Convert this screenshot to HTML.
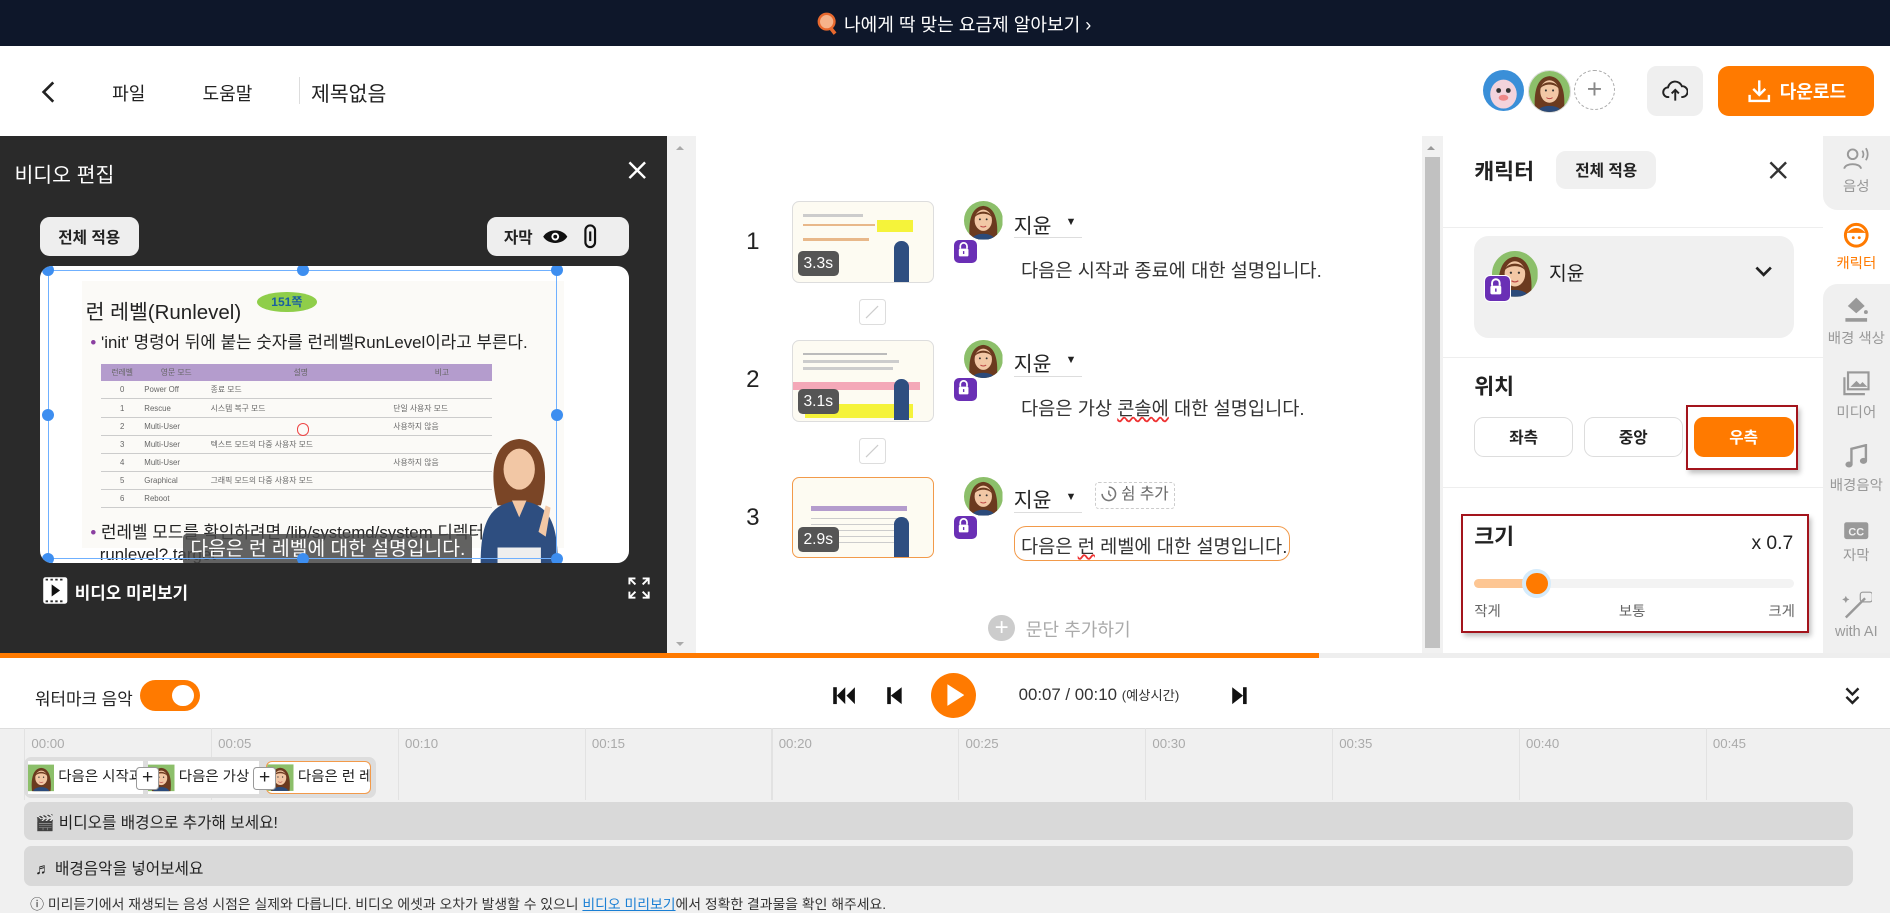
<!DOCTYPE html>
<html><head><meta charset="utf-8"><style>
html,body{margin:0;padding:0;}
html{zoom:1.2054;}
body{width:1568px;height:757px;position:relative;overflow:hidden;background:#fff;font-family:"Liberation Sans","Noto Sans CJK KR",sans-serif;color:#222;}
.a{position:absolute;}
.btn{position:absolute;display:flex;align-items:center;justify-content:center;box-sizing:border-box;}
.av{position:absolute;border-radius:50%;overflow:hidden;}
.lock{position:absolute;width:19px;height:19px;background:#6a2fb5;border-radius:5px;border:1.5px solid #fff;}
.tab{position:absolute;left:1512px;width:56px;text-align:center;font-size:12px;color:#999;}
.tl{position:absolute;top:611px;font-size:11px;color:#aaa;}
.vl{position:absolute;top:604px;width:1px;height:60px;background:#e2e2e2;}
.nm{position:absolute;font-size:17px;width:57px;border-bottom:1px solid #ddd;height:24px;}
.nm span{position:absolute;left:43px;top:6px;font-size:9px;}
</style></head><body>
<svg width="0" height="0" style="position:absolute"><defs>
<symbol id="face" viewBox="0 0 40 40"><rect width="40" height="40" fill="#8cbf6a"/><path d="M6 40 C4 20 8 6 20 5 C32 6 36 20 34 40Z" fill="#6b3a1f"/><ellipse cx="20" cy="20" rx="9" ry="11" fill="#f2c7a5"/><path d="M11 17 C13 9 27 9 29 17 C25 12 15 12 11 17Z" fill="#6b3a1f"/><path d="M8 40 C10 32 30 32 32 40Z" fill="#2b4a7a"/><circle cx="16.5" cy="19" r="1" fill="#333"/><circle cx="23.5" cy="19" r="1" fill="#333"/><path d="M17 26 Q20 28 23 26" stroke="#b44" fill="none"/></symbol>
<symbol id="lk" viewBox="0 0 20 20"><path d="M6.5 9V6.5a3.5 3.5 0 0 1 7 0V9" stroke="#fff" stroke-width="1.8" fill="none"/><rect x="5" y="9" width="10" height="8" rx="1.5" fill="#fff"/><rect x="9.3" y="11.5" width="1.4" height="3" fill="#6a2fb5"/></symbol>
</defs></svg>

<!-- banner -->
<div class="a" style="left:0;top:0;width:1568px;height:38px;background:#0e172a;"></div>
<div class="a" style="left:678px;top:9px;color:#fff;font-size:15px;white-space:nowrap;"><svg width="18" height="20" viewBox="0 0 18 20" style="vertical-align:-4px"><circle cx="8" cy="8" r="6.5" fill="#f6b38a" stroke="#e8692e" stroke-width="2"/><path d="M11 13l4 5" stroke="#e8692e" stroke-width="3"/></svg> 나에게 딱 맞는 요금제 알아보기 ›</div>

<!-- header -->
<div class="a" style="left:0;top:38px;width:1568px;height:75px;border-bottom:1px solid #e6e6e6;"></div>
<svg class="a" style="left:33px;top:66px" width="14" height="20"><path d="M11 2L3 10l8 8" stroke="#222" stroke-width="2.2" fill="none"/></svg>
<div class="a" style="left:93px;top:66px;font-size:15px;">파일</div>
<div class="a" style="left:168px;top:66px;font-size:15px;">도움말</div>
<div class="a" style="left:248px;top:64px;width:1px;height:22px;background:#ddd;"></div>
<div class="a" style="left:258px;top:64px;font-size:17px;">제목없음</div>
<div class="av" style="left:1230px;top:58px;width:34px;height:34px;background:#3a8fd8;"><svg width="34" height="34" viewBox="0 0 34 34"><ellipse cx="17" cy="20" rx="11" ry="12" fill="#f3d3dc"/><circle cx="13" cy="17" r="2" fill="#333"/><circle cx="21" cy="17" r="2" fill="#333"/><ellipse cx="17" cy="23" rx="4" ry="2.5" fill="#e88"/></svg></div>
<div class="av" style="left:1268px;top:58px;width:34px;height:34px;border:1px solid #ddd"><svg width="34" height="34"><use href="#face"/></svg></div>
<div class="av" style="left:1306px;top:58px;width:32px;height:32px;border:1px dashed #aaa;text-align:center;line-height:30px;font-size:22px;color:#888;">+</div>
<div class="btn" style="left:1366px;top:55px;width:47px;height:41px;background:#efefef;border-radius:8px;"><svg width="22" height="20" viewBox="0 0 22 20"><path d="M6 15H5a4 4 0 0 1 0-8 6 6 0 0 1 11.5-1A4.5 4.5 0 0 1 17 15h-1" stroke="#222" stroke-width="1.6" fill="none"/><path d="M11 18V9M8 12l3-3 3 3" stroke="#222" stroke-width="1.6" fill="none"/></svg></div>
<div class="btn" style="left:1425px;top:55px;width:130px;height:41px;background:#ff7a00;border-radius:9px;color:#fff;font-weight:bold;font-size:15px;"><svg width="22" height="22" viewBox="0 0 22 22" style="margin-right:6px"><path d="M11 2v12M6 9l5 5 5-5M3 14v5h16v-5" stroke="#fff" stroke-width="2" fill="none"/></svg>다운로드</div>

<!-- left panel -->
<div class="a" style="left:0;top:113px;width:553px;height:432px;background:#2a2a2a;"></div>
<div class="a" style="left:12px;top:131px;color:#fff;font-size:17px;">비디오 편집</div>
<svg class="a" style="left:520px;top:133px" width="17" height="17"><path d="M2 2l13 13M15 2L2 15" stroke="#fff" stroke-width="2"/></svg>
<div class="btn" style="left:33px;top:180px;width:82px;height:32px;background:#eee;border-radius:8px;font-size:13px;font-weight:bold;">전체 적용</div>
<div class="btn" style="left:404px;top:180px;width:118px;height:32px;background:#eee;border-radius:8px;font-size:13px;font-weight:bold;justify-content:flex-start;padding-left:14px;">자막 <svg width="22" height="16" viewBox="0 0 22 16" style="margin-left:8px"><path d="M1 8C5 1 17 1 21 8 17 15 5 15 1 8Z" fill="#111"/><circle cx="11" cy="8" r="3.2" fill="#fff"/><circle cx="11" cy="8" r="1.6" fill="#111"/></svg><svg width="12" height="22" viewBox="0 0 12 22" style="margin-left:12px"><rect x="2" y="2" width="8" height="18" rx="4" stroke="#111" stroke-width="1.8" fill="none"/><path d="M6 7v8" stroke="#111" stroke-width="1.8"/></svg></div>
<div class="a" style="left:33px;top:221px;width:489px;height:246px;background:#fff;border-radius:10px;overflow:hidden;">
 <div class="a" style="left:35px;top:12px;width:400px;height:222px;background:#fbfaf7;"></div>
 <div class="a" style="left:38px;top:24px;font-size:17px;color:#222;">런 레벨(Runlevel)</div>
 <div class="a" style="left:180px;top:21px;width:50px;height:17px;background:#8fce4a;border-radius:50%;font-size:10px;color:#1a5fa0;font-weight:bold;text-align:center;line-height:17px;">151쪽</div>
 <div class="a" style="left:42px;top:51px;font-size:14px;color:#222;white-space:nowrap;"><span style="color:#8a3fa0">•</span> 'init' 명령어 뒤에 붙는 숫자를 런레벨RunLevel이라고 부른다.</div>
 <table class="a" style="left:51px;top:81px;width:324px;border-collapse:collapse;font-size:6.5px;color:#666;">
  <tr style="background:#b49ccd;height:14px;text-align:center"><td>런레벨</td><td>영문 모드</td><td>설명</td><td>비고</td></tr>
  <tr style="height:15px;border-bottom:1px solid #ccc"><td align=center>0</td><td>Power Off</td><td>종료 모드</td><td></td></tr>
  <tr style="height:15px;border-bottom:1px solid #ccc"><td align=center>1</td><td>Rescue</td><td>시스템 복구 모드</td><td>단일 사용자 모드</td></tr>
  <tr style="height:15px;border-bottom:1px solid #ccc"><td align=center>2</td><td>Multi-User</td><td></td><td>사용하지 않음</td></tr>
  <tr style="height:15px;border-bottom:1px solid #ccc"><td align=center>3</td><td>Multi-User</td><td>텍스트 모드의 다중 사용자 모드</td><td></td></tr>
  <tr style="height:15px;border-bottom:1px solid #ccc"><td align=center>4</td><td>Multi-User</td><td></td><td>사용하지 않음</td></tr>
  <tr style="height:15px;border-bottom:1px solid #ccc"><td align=center>5</td><td>Graphical</td><td>그래픽 모드의 다중 사용자 모드</td><td></td></tr>
  <tr style="height:15px;border-bottom:1px solid #ccc"><td align=center>6</td><td>Reboot</td><td></td><td></td></tr>
 </table>
 <div class="a" style="left:42px;top:212px;font-size:14px;color:#222;white-space:nowrap;line-height:18px;"><span style="color:#8a3fa0">•</span> 런레벨 모드를 확인하려면 /lib/systemd/system 디렉터<br>&nbsp; runlevel?.target</div>
 <div class="a" style="left:119px;top:222px;width:240px;height:26px;background:rgba(70,70,70,.85);border-radius:3px;color:#fff;font-size:16px;line-height:26px;text-align:center;">다음은 런 레벨에 대한 설명입니다.</div>
 <svg class="a" style="left:358px;top:138px" width="80" height="108" viewBox="0 0 80 108"><path d="M22 60C14 30 20 6 40 5 60 6 66 30 58 60Z" fill="#7a4526"/><ellipse cx="40" cy="30" rx="13" ry="17" fill="#f2c7a5"/><path d="M8 108C8 70 18 58 40 56 62 58 72 70 72 108Z" fill="#2e4e80"/><path d="M34 56h12l-6 14z" fill="#f2c7a5"/><rect x="22" y="95" width="36" height="13" fill="#eee"/><path d="M56 82l6-22 4 2-4 24z" fill="#f2c7a5"/></svg>
 <div class="a" style="left:7px;top:3px;width:422px;height:240px;border:1.5px solid #6fb0ff;box-sizing:border-box;"></div>
 <div class="a" style="left:2px;top:-2px;width:10px;height:10px;border-radius:50%;background:#3d8ef0"></div>
 <div class="a" style="left:213px;top:-2px;width:10px;height:10px;border-radius:50%;background:#3d8ef0"></div>
 <div class="a" style="left:424px;top:-2px;width:10px;height:10px;border-radius:50%;background:#3d8ef0"></div>
 <div class="a" style="left:2px;top:118px;width:10px;height:10px;border-radius:50%;background:#3d8ef0"></div>
 <div class="a" style="left:424px;top:118px;width:10px;height:10px;border-radius:50%;background:#3d8ef0"></div>
 <div class="a" style="left:2px;top:238px;width:10px;height:10px;border-radius:50%;background:#3d8ef0"></div>
 <div class="a" style="left:213px;top:238px;width:10px;height:10px;border-radius:50%;background:#3d8ef0"></div>
 <div class="a" style="left:424px;top:238px;width:10px;height:10px;border-radius:50%;background:#3d8ef0"></div>
 <div class="a" style="left:213px;top:130px;width:9px;height:9px;border-radius:50%;border:1.5px solid #e44"></div>
</div>
<svg class="a" style="left:35px;top:478px" width="22" height="24" viewBox="0 0 22 24"><rect x="1" y="1" width="20" height="22" rx="2" fill="#fff"/><path d="M3 3h16M3 21h16" stroke="#2a2a2a" stroke-width="1.5" stroke-dasharray="2 2"/><path d="M8 7l7 5-7 5z" fill="#111"/></svg>
<div class="a" style="left:62px;top:480px;color:#fff;font-size:14px;font-weight:bold;">비디오 미리보기</div>
<svg class="a" style="left:520px;top:478px" width="20" height="20" viewBox="0 0 20 20" stroke="#fff" stroke-width="1.6" fill="none"><path d="M2 7V2h5M2 2l5 5M18 7V2h-5M18 2l-5 5M2 13v5h5M2 18l5-5M18 13v5h-5M18 18l-5-5"/></svg>

<!-- left scrollbar -->
<div class="a" style="left:553px;top:113px;width:24px;height:432px;background:#f1f1f1;"></div>
<div class="a" style="left:561px;top:118px;width:0;height:0;border:4px solid transparent;border-bottom-color:#aaa;"></div>
<div class="a" style="left:561px;top:533px;width:0;height:0;border:4px solid transparent;border-top-color:#aaa;"></div>

<!-- center rows -->
<div class="a" style="left:577px;top:113px;width:603px;height:432px;background:#fff;"></div>
<div class="a" style="left:619px;top:189px;font-size:20px;">1</div>
<div class="a" style="left:657px;top:167px;width:118px;height:68px;border:1px solid #ddd;border-radius:6px;background:#fdfbf2;overflow:hidden;box-sizing:border-box;">
 <div class="a" style="left:70px;top:15px;width:30px;height:10px;background:#f5f33a"></div>
 <div class="a" style="left:8px;top:10px;width:50px;height:2px;background:#ccc"></div><div class="a" style="left:8px;top:18px;width:60px;height:2px;background:#e8b88a"></div><div class="a" style="left:8px;top:30px;width:55px;height:2px;background:#e8b88a"></div>
 <div class="a" style="left:4px;top:40px;width:34px;height:21px;background:#555;border-radius:4px;color:#fff;font-size:13px;text-align:center;line-height:21px;">3.3s</div>
 <div class="a" style="left:84px;top:32px;width:12px;height:34px;background:#2e4e80;border-radius:6px 6px 0 0"></div>
</div>
<div class="av" style="left:800px;top:167px;width:32px;height:32px;"><svg width="32" height="32"><use href="#face"/></svg></div>
<div class="lock" style="left:791px;top:198px;"><svg width="16" height="16"><use href="#lk"/></svg></div>
<div class="nm" style="left:841px;top:173px;">지윤<span>▼</span></div>
<div class="a" style="left:847px;top:212px;font-size:15.5px;color:#333;">다음은 시작과 종료에 대한 설명입니다.</div>

<div class="a" style="left:713px;top:248px;width:20px;height:20px;border:1px solid #ddd;border-radius:3px;"><svg width="20" height="20"><path d="M5 15L15 5" stroke="#ccc"/></svg></div>

<div class="a" style="left:619px;top:304px;font-size:20px;">2</div>
<div class="a" style="left:657px;top:282px;width:118px;height:68px;border:1px solid #ddd;border-radius:6px;background:#fdfbf2;overflow:hidden;box-sizing:border-box;">
 <div class="a" style="left:8px;top:10px;width:70px;height:2px;background:#bbb"></div><div class="a" style="left:8px;top:16px;width:80px;height:2px;background:#ccc"></div><div class="a" style="left:8px;top:22px;width:75px;height:2px;background:#ccc"></div>
 <div class="a" style="left:0;top:34px;width:105px;height:7px;background:#f4a8b8"></div>
 <div class="a" style="left:10px;top:52px;width:90px;height:12px;background:#f5f33a"></div>
 <div class="a" style="left:4px;top:40px;width:34px;height:21px;background:#555;border-radius:4px;color:#fff;font-size:13px;text-align:center;line-height:21px;">3.1s</div>
 <div class="a" style="left:84px;top:32px;width:12px;height:34px;background:#2e4e80;border-radius:6px 6px 0 0"></div>
</div>
<div class="av" style="left:800px;top:282px;width:32px;height:32px;"><svg width="32" height="32"><use href="#face"/></svg></div>
<div class="lock" style="left:791px;top:313px;"><svg width="16" height="16"><use href="#lk"/></svg></div>
<div class="nm" style="left:841px;top:288px;">지윤<span>▼</span></div>
<div class="a" style="left:847px;top:327px;font-size:15.5px;color:#333;">다음은 가상 <span style="text-decoration:underline wavy #e33;">콘솔에</span> 대한 설명입니다.</div>

<div class="a" style="left:713px;top:363px;width:20px;height:20px;border:1px solid #ddd;border-radius:3px;"><svg width="20" height="20"><path d="M5 15L15 5" stroke="#ccc"/></svg></div>

<div class="a" style="left:619px;top:418px;font-size:20px;">3</div>
<div class="a" style="left:657px;top:396px;width:118px;height:67px;border:1px solid #f29a4a;border-radius:6px;background:#fdfbf2;overflow:hidden;box-sizing:border-box;">
 <div class="a" style="left:15px;top:23px;width:80px;height:4px;background:#b49ccd"></div>
 <div class="a" style="left:15px;top:29px;width:80px;height:25px;background:repeating-linear-gradient(#fdfbf2 0 4px,#ccc 4px 5px)"></div>
 <div class="a" style="left:4px;top:40px;width:34px;height:21px;background:#555;border-radius:4px;color:#fff;font-size:13px;text-align:center;line-height:21px;">2.9s</div>
 <div class="a" style="left:84px;top:32px;width:12px;height:34px;background:#2e4e80;border-radius:6px 6px 0 0"></div>
</div>
<div class="av" style="left:800px;top:396px;width:32px;height:32px;"><svg width="32" height="32"><use href="#face"/></svg></div>
<div class="lock" style="left:791px;top:427px;"><svg width="16" height="16"><use href="#lk"/></svg></div>
<div class="nm" style="left:841px;top:401px;">지윤<span>▼</span></div>
<div class="a" style="left:908px;top:400px;width:67px;height:22px;border:1px dashed #ccc;border-radius:3px;font-size:13px;color:#666;box-sizing:border-box;text-align:center;line-height:20px;"><svg width="13" height="13" viewBox="0 0 14 14" style="vertical-align:-2px"><path d="M7 1a6 6 0 1 1-6 6" stroke="#777" stroke-width="1.4" fill="none"/><path d="M7 4v3l2 2" stroke="#777" stroke-width="1.3" fill="none"/></svg> 쉼 추가</div>
<div class="a" style="left:841px;top:436px;width:229px;height:29px;border:1.5px solid #f29a4a;border-radius:10px;box-sizing:border-box;"></div>
<div class="a" style="left:847px;top:441px;font-size:15.5px;color:#333;">다음은 <span style="text-decoration:underline wavy #e33;">런</span> 레벨에 대한 설명입니다.</div>

<div class="a" style="left:820px;top:510px;width:22px;height:22px;border-radius:50%;background:#ccc;color:#fff;text-align:center;line-height:22px;font-size:20px;">+</div>
<div class="a" style="left:851px;top:511px;font-size:15px;color:#aaa;">문단 추가하기</div>

<!-- center scrollbar -->
<div class="a" style="left:1180px;top:113px;width:17px;height:432px;background:#f1f1f1;"></div>
<div class="a" style="left:1182px;top:130px;width:13px;height:408px;background:#c1c1c1;"></div>
<div class="a" style="left:1184px;top:118px;width:0;height:0;border:4px solid transparent;border-bottom-color:#999;"></div>

<!-- right panel -->
<div class="a" style="left:1197px;top:113px;width:315px;height:432px;background:#fff;"></div>
<div class="a" style="left:1223px;top:129px;font-size:18px;font-weight:bold;">캐릭터</div>
<div class="btn" style="left:1291px;top:125px;width:83px;height:32px;background:#f0f0f0;border-radius:8px;font-size:13px;font-weight:bold;">전체 적용</div>
<svg class="a" style="left:1467px;top:133px" width="17" height="17"><path d="M2 2l13 13M15 2L2 15" stroke="#333" stroke-width="2"/></svg>
<div class="a" style="left:1197px;top:188px;width:315px;height:1px;background:#eee;"></div>
<div class="a" style="left:1223px;top:196px;width:265px;height:84px;background:#f0f0f0;border-radius:12px;"></div>
<div class="av" style="left:1238px;top:208px;width:38px;height:38px;"><svg width="38" height="38"><use href="#face"/></svg></div>
<div class="lock" style="left:1231px;top:228px;width:21px;height:21px;"><svg width="18" height="18"><use href="#lk"/></svg></div>
<div class="a" style="left:1285px;top:214px;font-size:16px;">지윤</div>
<svg class="a" style="left:1455px;top:219px" width="16" height="12"><path d="M2 3l6 6 6-6" stroke="#222" stroke-width="2.2" fill="none"/></svg>
<div class="a" style="left:1197px;top:296px;width:315px;height:1px;background:#eee;"></div>
<div class="a" style="left:1223px;top:307px;font-size:18px;font-weight:bold;">위치</div>
<div class="btn" style="left:1223px;top:346px;width:82px;height:33px;border:1px solid #ddd;border-radius:8px;font-size:13px;font-weight:bold;">좌측</div>
<div class="btn" style="left:1314px;top:346px;width:82px;height:33px;border:1px solid #ddd;border-radius:8px;font-size:13px;font-weight:bold;">중앙</div>
<div class="btn" style="left:1405px;top:346px;width:83px;height:33px;background:#ff7a00;border-radius:8px;font-size:13px;font-weight:bold;color:#fff;">우측</div>
<div class="a" style="left:1399px;top:336px;width:93px;height:54px;border:2px solid #a3141c;box-sizing:border-box;box-shadow:2px 3px 4px rgba(0,0,0,.25);"></div>
<div class="a" style="left:1197px;top:404px;width:315px;height:1px;background:#eee;"></div>
<div class="a" style="left:1223px;top:431px;font-size:18px;font-weight:bold;">크기</div>
<div class="a" style="left:1453px;top:442px;font-size:16px;">x 0.7</div>
<div class="a" style="left:1223px;top:480px;width:265px;height:8px;background:#f3f3f3;border-radius:4px;"></div>
<div class="a" style="left:1223px;top:480px;width:52px;height:8px;background:#fdc693;border-radius:4px;"></div>
<div class="a" style="left:1263px;top:472px;width:24px;height:24px;border-radius:50%;background:#d5ebfb;"></div>
<div class="a" style="left:1266px;top:475px;width:18px;height:18px;border-radius:50%;background:#ff7a00;"></div>
<div class="a" style="left:1223px;top:498px;font-size:12px;color:#666;">작게</div>
<div class="a" style="left:1343px;top:498px;font-size:12px;color:#666;">보통</div>
<div class="a" style="left:1467px;top:498px;font-size:12px;color:#666;">크게</div>
<div class="a" style="left:1212px;top:426px;width:289px;height:99px;border:2px solid #a3141c;box-sizing:border-box;box-shadow:2px 3px 4px rgba(0,0,0,.25);"></div>

<!-- side tabs -->
<div class="a" style="left:1512px;top:113px;width:56px;height:432px;background:#fff;"></div>
<div class="a" style="left:1512px;top:113px;width:56px;height:61px;background:#f0f0f0;border-radius:0 0 0 12px;"></div>
<div class="a" style="left:1512px;top:236px;width:56px;height:309px;background:#f0f0f0;border-radius:12px 0 0 0;"></div>
<div class="tab" style="top:122px;"><svg width="22" height="20" viewBox="0 0 22 20"><circle cx="8" cy="6" r="4" stroke="#999" stroke-width="1.6" fill="none"/><path d="M1 18c1-5 13-5 14 0" stroke="#999" stroke-width="1.6" fill="none"/><path d="M16 3q2 3 0 6M19 1q3 5 0 10" stroke="#999" stroke-width="1.4" fill="none"/></svg><br>음성</div>
<div class="tab" style="top:184px;color:#ff7a00;"><svg width="22" height="22" viewBox="0 0 22 22"><circle cx="11" cy="11" r="9" stroke="#ff7a00" stroke-width="2.5" fill="#fff"/><path d="M3 9q8-8 16 0" fill="#ff7a00"/><circle cx="8.5" cy="13" r="1.2" fill="#ff7a00"/><circle cx="13.5" cy="13" r="1.2" fill="#ff7a00"/></svg><br>캐릭터</div>
<div class="tab" style="top:244px;white-space:nowrap;"><svg width="22" height="24" viewBox="0 0 22 24"><path d="M4 10l7-7 7 7-7 6z" fill="#999"/><circle cx="19" cy="15" r="1.6" fill="#999"/><rect x="2" y="20" width="18" height="3" fill="#999"/></svg><br>배경 색상</div>
<div class="tab" style="top:307px;"><svg width="24" height="22" viewBox="0 0 24 22"><rect x="5" y="2" width="17" height="14" stroke="#999" stroke-width="1.8" fill="none"/><path d="M7 14l5-5 3 3 2-2 4 4z" fill="#999"/><path d="M2 6v14h17" stroke="#999" stroke-width="1.8" fill="none"/></svg><br>미디어</div>
<div class="tab" style="top:368px;white-space:nowrap;"><svg width="22" height="22" viewBox="0 0 22 22"><path d="M7 17V4l12-3v13" stroke="#999" stroke-width="2" fill="none"/><ellipse cx="5" cy="17" rx="3" ry="2.5" fill="#999"/><ellipse cx="17" cy="14" rx="3" ry="2.5" fill="#999"/></svg><br>배경음악</div>
<div class="tab" style="top:432px;"><svg width="22" height="16" viewBox="0 0 22 16"><rect x="1" y="1" width="20" height="14" rx="2" fill="#999"/><text x="11" y="12" font-size="9" fill="#f0f0f0" text-anchor="middle" font-weight="bold" font-family="Liberation Sans">CC</text></svg><br>자막</div>
<div class="tab" style="top:490px;white-space:nowrap;"><svg width="26" height="24" viewBox="0 0 26 24"><path d="M4 22L20 6" stroke="#999" stroke-width="2"/><path d="M4 4l1 2 2 1-2 1-1 2-1-2-2-1 2-1z" fill="#999"/><rect x="16" y="1" width="10" height="8" rx="2" stroke="#999" fill="none"/></svg><br>with AI</div>

<!-- progress -->
<div class="a" style="left:0;top:542px;width:1568px;height:4px;background:#eee;"></div>
<div class="a" style="left:0;top:542px;width:1094px;height:4px;background:#ff7a00;"></div>

<!-- controls -->
<div class="a" style="left:29px;top:568px;font-size:14px;">워터마크 음악</div>
<div class="a" style="left:116px;top:564px;width:50px;height:26px;background:#ff7a00;border-radius:13px;"></div>
<div class="a" style="left:143px;top:568px;width:18px;height:18px;background:#fff;border-radius:50%;"></div>
<svg class="a" style="left:690px;top:569px" width="20" height="16" viewBox="0 0 20 16"><rect x="1" y="1" width="3" height="14" fill="#111"/><path d="M11 1v14L4 8z M19 1v14L12 8z" fill="#111"/></svg>
<svg class="a" style="left:735px;top:569px" width="14" height="16" viewBox="0 0 14 16"><rect x="1" y="1" width="3" height="14" fill="#111"/><path d="M13 1v14L4 8z" fill="#111"/></svg>
<div class="a" style="left:772px;top:558px;width:38px;height:38px;border-radius:50%;background:#ff7a00;"></div>
<svg class="a" style="left:784px;top:567px" width="16" height="20"><path d="M2 1v18l14-9z" fill="#fff"/></svg>
<div class="a" style="left:845px;top:568px;font-size:14px;color:#333;">00:07 / 00:10 <span style="font-size:11px">(예상시간)</span></div>
<svg class="a" style="left:1021px;top:569px" width="14" height="16" viewBox="0 0 14 16"><path d="M1 1v14l9-7z" fill="#111"/><rect x="10" y="1" width="3" height="14" fill="#111"/></svg>
<svg class="a" style="left:1530px;top:569px" width="14" height="16" viewBox="0 0 14 16"><path d="M2 2l5 5 5-5M2 9l5 5 5-5" stroke="#222" stroke-width="2" fill="none"/></svg>

<!-- timeline -->
<div class="a" style="left:0;top:604px;width:1568px;height:153px;background:#f0f0f0;border-top:1px solid #ddd;"></div>
<div class="vl" style="left:20px"></div><div class="vl" style="left:175px"></div><div class="vl" style="left:330px"></div><div class="vl" style="left:485px"></div><div class="vl" style="left:640px"></div><div class="vl" style="left:795px"></div><div class="vl" style="left:950px"></div><div class="vl" style="left:1105px"></div><div class="vl" style="left:1260px"></div><div class="vl" style="left:1415px"></div>
<div class="tl" style="left:26px">00:00</div><div class="tl" style="left:181px">00:05</div><div class="tl" style="left:336px">00:10</div><div class="tl" style="left:491px">00:15</div><div class="tl" style="left:646px">00:20</div><div class="tl" style="left:801px">00:25</div><div class="tl" style="left:956px">00:30</div><div class="tl" style="left:1111px">00:35</div><div class="tl" style="left:1266px">00:40</div><div class="tl" style="left:1421px">00:45</div>
<div class="a" style="left:20px;top:628px;width:292px;height:34px;background:#ddd;border-radius:6px;"></div>
<div class="a" style="left:23px;top:631px;width:96px;height:28px;background:#fff;overflow:hidden;font-size:12px;white-space:nowrap;line-height:28px;"><svg width="22" height="28" style="vertical-align:top"><use href="#face"/></svg> 다음은 시작과</div>
<div class="a" style="left:123px;top:631px;width:92px;height:28px;background:#fff;overflow:hidden;font-size:12px;white-space:nowrap;line-height:28px;"><svg width="22" height="28" style="vertical-align:top"><use href="#face"/></svg> 다음은 가상</div>
<div class="a" style="left:221px;top:631px;width:87px;height:28px;background:#fff;overflow:hidden;font-size:12px;white-space:nowrap;line-height:26px;border:1px solid #f29a4a;border-radius:5px;box-sizing:border-box;"><svg width="22" height="26" style="vertical-align:top"><use href="#face"/></svg> 다음은 런 레</div>
<div class="btn" style="left:113px;top:636px;width:19px;height:19px;background:#fff;border:1px solid #999;border-radius:3px;font-size:16px;">+</div>
<div class="btn" style="left:210px;top:636px;width:19px;height:19px;background:#fff;border:1px solid #999;border-radius:3px;font-size:16px;">+</div>
<div class="a" style="left:20px;top:665px;width:1517px;height:32px;background:#d9d9d9;border-radius:6px;"></div>
<div class="a" style="left:29px;top:672px;font-size:13px;">🎬 비디오를 배경으로 추가해 보세요!</div>
<div class="a" style="left:20px;top:702px;width:1517px;height:33px;background:#d9d9d9;border-radius:6px;"></div>
<div class="a" style="left:29px;top:710px;font-size:13px;">♬ 배경음악을 넣어보세요</div>
<div class="a" style="left:25px;top:741px;font-size:11.5px;color:#333;white-space:nowrap;">ⓘ 미리듣기에서 재생되는 음성 시점은 실제와 다릅니다. 비디오 에셋과 오차가 발생할 수 있으니 <span style="color:#1a7fd4;text-decoration:underline">비디오 미리보기</span>에서 정확한 결과물을 확인 해주세요.</div>
</body></html>
